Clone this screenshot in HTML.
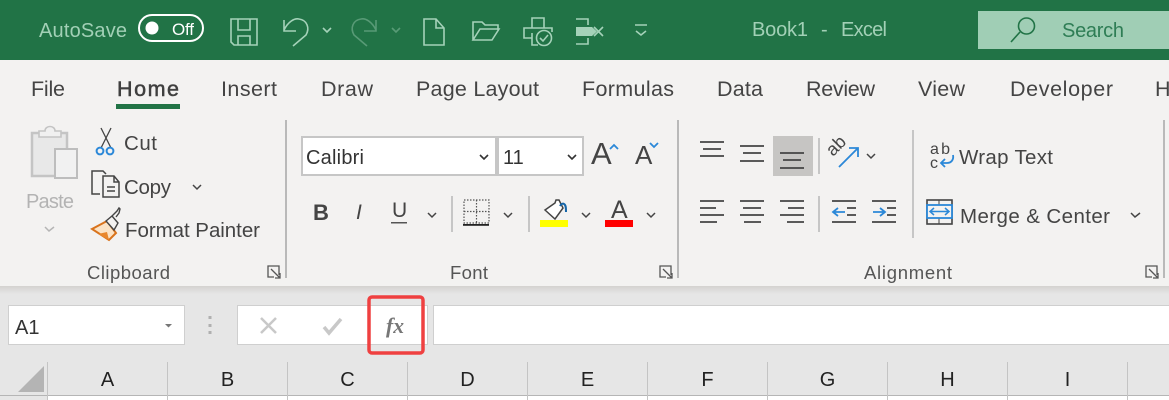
<!DOCTYPE html>
<html><head><meta charset="utf-8"><style>
html,body{margin:0;padding:0;width:1169px;height:400px;overflow:hidden;background:#e6e6e6}
svg{display:block}
text{font-family:"Liberation Sans",sans-serif;fill:#444}
.t{font-size:21.5px;fill:#444}
.r{font-size:20.5px;fill:#444}
.g{font-size:18.5px;fill:#555}
.q{fill:none;stroke:#a5d2b9;stroke-width:1.6}
.c{fill:none;stroke:#444;stroke-width:1.5}
.l{stroke:#444;stroke-width:1.7}
.s{stroke:#c6c6c6;stroke-width:2}
</style></head><body>
<svg width="1169" height="400" viewBox="0 0 1169 400" xmlns="http://www.w3.org/2000/svg">
<defs><linearGradient id="sh" x1="0" y1="0" x2="0" y2="1"><stop offset="0" stop-color="#d4d2d0"/><stop offset="1" stop-color="#e6e6e6"/></linearGradient></defs>
<rect width="1169" height="60" fill="#217346"/>
<rect y="60" width="1169" height="226" fill="#f3f2f1"/>
<rect y="286" width="1169" height="114" fill="#e6e6e6"/>
<rect y="286" width="1169" height="8" fill="url(#sh)"/>
<!-- title bar -->
<text x="39" y="37" font-size="20" style="fill:#a2d0b6" textLength="88">AutoSave</text>
<rect x="139" y="15" width="64" height="26" rx="13" fill="none" stroke="#fff" stroke-width="2"/>
<circle cx="152" cy="28" r="6.500" fill="#fff"/>
<text x="172" y="35" font-size="17" style="fill:#fff" textLength="22">Off</text>
<path class="q" d="M231 19h26v26h-23l-3-3zM238 19v11h12V19M238 45v-9h12v9"/>
<path class="q" d="M284 20v11h12M284 30c4-8 10-12 15-11 8 1 11 9 7 16l-13 11" stroke-width="1.800"/>
<path class="q" d="M323 28l4 4 4-4" stroke-width="1.800"/>
<g opacity=".42"><path class="q" d="M376 20v11h-12M376 30c-4-8-10-12-15-11-8 1-11 9-7 16l13 11" stroke-width="1.800"/><path class="q" d="M392 28l4 4 4-4" stroke-width="1.800"/></g>
<path class="q" d="M424 19h12l8 9v17h-20zM436 19v9h8"/>
<path class="q" d="M473 40V22h9l3 3h13v5M473 40l7-11h19l-7 11z"/>
<path class="q" d="M532 28V18h12v10M532 38h-8V28h28v4M532 33v12h6"/><circle class="q" cx="544" cy="38" r="7.500"/><path class="q" d="M540 38l3 3 5-6"/>
<path class="q" d="M576 19h12v6M576 44h12v-6"/>
<path d="M576 27h16l5 4.500-5 4.500h-16z" fill="#a5d2b9"/>
<path class="q" d="M594 27l9 9M603 27l-9 9"/>
<path class="q" d="M635 25h12M636 31l5 4 5-4"/>
<text x="752" y="36" font-size="20" style="fill:#a2d0b6" textLength="56">Book1</text>
<text x="821" y="36" font-size="20" style="fill:#a2d0b6">-</text>
<text x="841" y="36" font-size="20" style="fill:#a2d0b6" textLength="46">Excel</text>
<rect x="978" y="11" width="191" height="38" fill="#a0ceb5"/>
<circle cx="1026.500" cy="26" r="8" fill="none" stroke="#217346" stroke-width="1.600"/>
<path d="M1020 32l-9 10" stroke="#217346" stroke-width="1.600"/>
<text x="1062" y="37" font-size="20" style="fill:#2e7d55" textLength="62">Search</text>
<!-- tabs -->
<text class="t" x="31" y="96" textLength="34">File</text>
<text class="t" x="117" y="96" textLength="62" style="stroke:#3f3f3f;stroke-width:.5;fill:#3f3f3f">Home</text>
<rect x="116" y="104" width="64" height="5" fill="#217346"/>
<text class="t" x="221" y="96" textLength="56">Insert</text>
<text class="t" x="321" y="96" textLength="52">Draw</text>
<text class="t" x="416" y="96" textLength="123">Page Layout</text>
<text class="t" x="582" y="96" textLength="92">Formulas</text>
<text class="t" x="717" y="96" textLength="46">Data</text>
<text class="t" x="806" y="96" textLength="69">Review</text>
<text class="t" x="918" y="96" textLength="47">View</text>
<text class="t" x="1010" y="96" textLength="103">Developer</text>
<text class="t" x="1155" y="96">H</text>
<!-- clipboard -->
<path d="M32 133h35v43H32z" fill="#e8e8e8" stroke="#c4c4c4" stroke-width="2.500"/>
<path d="M39 137v-6h6c0-6 10-6 10 0h6v6z" fill="#f0f0f0" stroke="#c4c4c4" stroke-width="1.600"/>
<rect x="55" y="149" width="22" height="29" fill="#f1f1f1" stroke="#bdbdbd" stroke-width="2"/>
<text x="26" y="208" font-size="20" style="fill:#b3b3b3" textLength="48">Paste</text>
<path d="M45 227l4 4 5-4" fill="none" stroke="#b5b5b5" stroke-width="1.500"/>
<path d="M101 128l10 20M111 128l-10 20" stroke="#444" stroke-width="1.300"/>
<circle cx="100" cy="151" r="3.400" fill="none" stroke="#2b88d8" stroke-width="2"/><circle cx="110" cy="151" r="3.400" fill="none" stroke="#2b88d8" stroke-width="2"/>
<text class="r" x="124" y="150" textLength="33">Cut</text>
<path class="c" d="M100 194h-8v-23h11l3 3" stroke-width="1.600"/>
<path class="c" d="M103 176h11l5 6v15h-16zM114 176v6h5M107 187h8M107 191h8" stroke-width="1.600"/>
<text class="r" x="124" y="194" textLength="47">Copy</text>
<path class="c" d="M193 185l4 4 4-4"/>
<path d="M92 229l15-8 9 12-7 7z" fill="#fbe3c6" stroke="#d9731c" stroke-width="2"/>
<path d="M98 234l9-2 2 8z" fill="#e8872d"/>
<path d="M106 221l6-5 6 7-4 7zM112 216l5-5 2-3 1 1-1 4-3 4" fill="#f3f2f1" stroke="#444" stroke-width="1.400"/>
<text class="r" x="125" y="237" textLength="135">Format Painter</text>
<text class="g" x="87" y="279" textLength="83">Clipboard</text>
<path d="M279 275v-9h-11v11h6M271 269l9 9M280 273v5h-5" fill="none" stroke="#555" stroke-width="1.300"/>
<rect x="285" y="120" width="2" height="158" fill="#b9b9b9"/>
<!-- font -->
<rect x="302" y="137" width="194" height="38" fill="#fff" stroke="#c6c6c6" stroke-width="2"/>
<rect x="498" y="137" width="85" height="38" fill="#fff" stroke="#c6c6c6" stroke-width="2"/>
<text x="306" y="164" font-size="20" style="fill:#333" textLength="58">Calibri</text>
<text x="503" y="164" font-size="20" style="fill:#333">11</text>
<path d="M480 155l4 4 4-4M568 155l4 4 4-4" fill="none" stroke="#333" stroke-width="1.600"/>
<text x="591" y="164" font-size="31" style="fill:#444">A</text>
<path d="M610 149l4-4 4 4" fill="none" stroke="#2b88d8" stroke-width="1.800"/>
<text x="635" y="164" font-size="26" style="fill:#444">A</text>
<path d="M650 143l4 4 4-4" fill="none" stroke="#2b88d8" stroke-width="1.800"/>
<text x="313" y="220" font-size="22" style="font-weight:bold;fill:#444">B</text>
<text x="356" y="219" font-size="21" style="font-style:italic;fill:#444">I</text>
<text x="392" y="217" font-size="21" style="fill:#444">U</text>
<rect x="391" y="222" width="16" height="1.500" fill="#555"/>
<path class="c" d="M428 213l4 4 4-4M504 213l4 4 4-4M582 213l4 4 4-4M647 213l4 4 4-4"/>
<path class="s" d="M452 196v36M529 196v36"/>
<path d="M464 200h25v23h-25zM476.500 200v23M464 211.500h25" fill="none" stroke="#555" stroke-width="1.200" stroke-dasharray="1.500 1.500"/>
<rect x="463" y="224" width="26" height="1.800" fill="#222"/>
<path d="M545 210l10-7 1-3 3 0 4 8-8 11z" fill="#fff" stroke="#444" stroke-width="1.500"/>
<path d="M560 206c1-2 3-3 4-2 2 1 2 4 2 8" fill="none" stroke="#1565a8" stroke-width="2"/>
<rect x="540" y="220" width="28" height="7" fill="#ff0"/>
<text x="611" y="218" font-size="25" style="fill:#444">A</text>
<rect x="605" y="220" width="28" height="7" fill="#f00"/>
<text class="g" x="450" y="279" textLength="38">Font</text>
<path d="M671 275v-9h-11v11h6M663 269l9 9M672 273v5h-5" fill="none" stroke="#555" stroke-width="1.300"/>
<rect x="677" y="120" width="2" height="158" fill="#b9b9b9"/>
<!-- alignment -->
<rect x="773" y="136" width="40" height="40" fill="#c6c5c3"/>
<path class="l" d="M700 142h24M703 149h18M700 156h24M740 146h24M743 153h18M740 161h24M780 153h24M783 160h18M780 168h24"/>
<path class="s" d="M819 138v36M819 196v36M913 130v108"/>
<text x="0" y="0" font-size="18" transform="translate(833 157) rotate(-45)" style="fill:#444">ab</text>
<path d="M839 167l18-18M849 148h9v9" fill="none" stroke="#2b88d8" stroke-width="1.800"/>
<path class="c" d="M867 154l4 4 4-4"/>
<path class="l" d="M700 201h24M700 208h16M700 215h24M700 222h17M740 201h24M743 208h18M740 215h24M744 222h17M780 201h24M788 208h16M780 215h24M787 222h17"/>
<path class="l" d="M832 201h24M847 208h9M847 215h9M832 222h24M872 201h24M887 208h9M887 215h9M872 222h24"/>
<path d="M833 212h12M838 208l-5 4 5 4M873 212h12M880 208l5 4-5 4" fill="none" stroke="#2b88d8" stroke-width="1.800"/>
<text x="930" y="154" font-size="16" style="fill:#444" textLength="20">ab</text>
<text x="930" y="168" font-size="16" style="fill:#444">c</text>
<path d="M953 155c1 5-2 8-6 8h-6M945 159l-4 4 4 4" fill="none" stroke="#2b88d8" stroke-width="1.800"/>
<text class="r" x="959" y="164" textLength="94">Wrap Text</text>
<rect x="927" y="200" width="25" height="24" fill="none" stroke="#444" stroke-width="1.600"/>
<path d="M939 200v24" stroke="#444"/>
<rect x="927" y="205" width="25" height="13" fill="#f3f2f1" stroke="#2b88d8" stroke-width="1.800"/>
<path d="M931 211.500h17M934 208l-4 3.500 4 3.500M945 208l4 3.500-4 3.500" fill="none" stroke="#2b88d8" stroke-width="1.500"/>
<text class="r" x="960" y="223" textLength="150">Merge &amp; Center</text>
<path class="c" d="M1131 213l4 4 5-4"/>
<text class="g" x="864" y="279" textLength="88">Alignment</text>
<path d="M1157 275v-9h-11v11h6M1149 269l9 9M1158 273v5h-5" fill="none" stroke="#555" stroke-width="1.300"/>
<rect x="1163" y="120" width="2" height="158" fill="#b9b9b9"/>
<!-- formula bar -->
<rect x="8.500" y="305.500" width="176" height="39" fill="#fff" stroke="#cfcfcf"/>
<text x="15" y="334" font-size="20" style="fill:#333">A1</text>
<path d="M165 324h7l-3.500 3.500z" fill="#777"/>
<path d="M210 316v3M210 324v3M210 331v3" stroke="#b0b0b0" stroke-width="3"/>
<rect x="237.500" y="305.500" width="190" height="39" fill="#fff" stroke="#cfcfcf"/>
<rect x="433.500" y="305.500" width="736" height="39" fill="#fff" stroke="#cfcfcf"/>
<path d="M261 318l15 15M276 318l-15 15" stroke="#c8c8c8" stroke-width="2.500"/>
<path d="M324 327l5 6 12-14" fill="none" stroke="#c8c8c8" stroke-width="3.500"/>
<text x="386" y="333" font-size="22" style="font-family:'Liberation Serif',serif;font-style:italic;font-weight:bold;fill:#777" textLength="18" lengthAdjust="spacingAndGlyphs">fx</text>
<rect x="369" y="297" width="54" height="56" rx="3" fill="none" stroke="#ef4040" stroke-width="3.500"/>
<!-- headers -->
<rect x="48" y="396" width="1121" height="4" fill="#fff"/>
<path d="M44 366v26H18z" fill="#b4b4b4"/>
<rect y="395" width="1169" height="1" fill="#b5b5b5"/>
<path d="M47.500 362v38M167.500 362v38M287.500 362v38M407.500 362v38M527.500 362v38M647.500 362v38M767.500 362v38M887.500 362v38M1007.500 362v38M1127.500 362v38" stroke="#c4c4c4"/>
<g font-size="20" text-anchor="middle">
<text x="107.500" y="386" style="fill:#222">A</text><text x="227.500" y="386" style="fill:#222">B</text><text x="347.500" y="386" style="fill:#222">C</text><text x="467.500" y="386" style="fill:#222">D</text><text x="587.500" y="386" style="fill:#222">E</text><text x="707.500" y="386" style="fill:#222">F</text><text x="827.500" y="386" style="fill:#222">G</text><text x="947.500" y="386" style="fill:#222">H</text><text x="1067.500" y="386" style="fill:#222">I</text>
</g>
</svg>
</body></html>
